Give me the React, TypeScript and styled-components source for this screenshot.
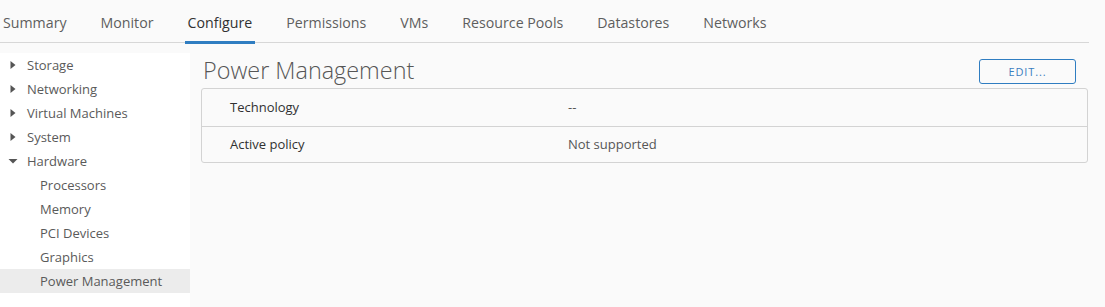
import styled, { createGlobalStyle } from "styled-components";

const GlobalStyle = createGlobalStyle`
  html, body {
    margin: 0;
    padding: 0;
    background: #fafafa;
    font-family: "Open Sans", "Liberation Sans", sans-serif;
    color: #565656;
  }
`;

const tabs = [
  "Summary",
  "Monitor",
  "Configure",
  "Permissions",
  "VMs",
  "Resource Pools",
  "Datastores",
  "Networks",
];

type NavItem = { label: string; level: number; caret?: "right" | "down"; active?: boolean };

const nav: NavItem[] = [
  { label: "Storage", level: 0, caret: "right" },
  { label: "Networking", level: 0, caret: "right" },
  { label: "Virtual Machines", level: 0, caret: "right" },
  { label: "System", level: 0, caret: "right" },
  { label: "Hardware", level: 0, caret: "down" },
  { label: "Processors", level: 1 },
  { label: "Memory", level: 1 },
  { label: "PCI Devices", level: 1 },
  { label: "Graphics", level: 1 },
  { label: "Power Management", level: 1, active: true },
];

const rows = [
  { label: "Technology", value: "--" },
  { label: "Active policy", value: "Not supported" },
];

export default function App() {
  return (
    <Page>
      <GlobalStyle />
      <TabBar>
        {tabs.map((t) => (
          <Tab key={t} $active={t === "Configure"}>
            {t}
          </Tab>
        ))}
      </TabBar>
      <Body>
        <Sidebar>
          {nav.map((n) => (
            <NavRow key={n.label} $level={n.level} $active={!!n.active}>
              {n.caret && (
                <Caret viewBox="0 0 10 10">
                  {n.caret === "right" ? (
                    <path d="M2.5 1 L7.5 5 L2.5 9 Z" fill="#555" />
                  ) : (
                    <path d="M0.5 3 L9.5 3 L5 7.5 Z" fill="#555" />
                  )}
                </Caret>
              )}
              {n.label}
            </NavRow>
          ))}
        </Sidebar>
        <Main>
          <Header>
            <Title>Power Management</Title>
            <EditButton>EDIT...</EditButton>
          </Header>
          <Table>
            {rows.map((r, i) => (
              <Row key={r.label} $first={i === 0}>
                <Label>{r.label}</Label>
                <Value>{r.value}</Value>
              </Row>
            ))}
          </Table>
        </Main>
      </Body>
    </Page>
  );
}

const Page = styled.div`
  width: 1105px;
  height: 307px;
  overflow: hidden;
  background: #fafafa;
`;

const TabBar = styled.nav`
  display: flex;
  height: 42px;
  margin-right: 16px;
  border-bottom: 1px solid #d7d7d7;
  padding-left: 3px;
  gap: 34px;
`;

const Tab = styled.div<{ $active: boolean }>`
  display: flex;
  align-items: center;
  font-size: 14.2px;
  padding: 4px ${(p) => (p.$active ? "3px" : "0")} 0;
  margin: 0 ${(p) => (p.$active ? "-3px" : "0")} -2px;
  color: ${(p) => (p.$active ? "#313131" : "#5e5e5e")};
  border-bottom: 3px solid ${(p) => (p.$active ? "#2f7dc1" : "transparent")};
`;

const Body = styled.div`
  display: flex;
  padding-top: 10px;
`;

const Sidebar = styled.aside`
  width: 190px;
  height: 254px;
  background: #fff;
`;

const NavRow = styled.div<{ $level: number; $active: boolean }>`
  display: flex;
  align-items: center;
  height: 24px;
  font-size: 13px;
  padding-left: ${(p) => (p.$level ? "40px" : "8px")};
  background: ${(p) => (p.$active ? "#ececec" : "transparent")};
  color: #5a5a5a;
`;

const Caret = styled.svg`
  width: 10px;
  height: 10px;
  margin-right: 9px;
`;

const Main = styled.main`
  flex: 1;
  padding: 5px 17px 0 11px;
`;

const Header = styled.div`
  display: flex;
  align-items: center;
  justify-content: space-between;
  height: 26px;
  padding-right: 12px;
`;

const Title = styled.h2`
  margin: -2px 0 0 2px;
  font-size: 23.4px;
  font-weight: 300;
  color: #565656;
`;

const EditButton = styled.button`
  width: 97px;
  height: 25px;
  border: 1px solid #2f7dc1;
  border-radius: 3px;
  background: transparent;
  color: #3a7ec0;
  font-family: inherit;
  font-size: 11px;
  letter-spacing: 0.08em;
  padding: 0;
`;

const Table = styled.div`
  margin-top: 4px;
  border: 1px solid #d3d3d3;
  border-radius: 3px;
`;

const Row = styled.div<{ $first: boolean }>`
  box-sizing: border-box;
  display: grid;
  grid-template-columns: 338px 1fr;
  height: ${(p) => (p.$first ? "37px" : "36px")};
  align-items: center;
  padding-left: 28px;
  padding-bottom: 2px;
  font-size: 13px;
  & + & {
    border-top: 1px solid #d3d3d3;
  }
`;

const Label = styled.div`
  color: #313131;
`;

const Value = styled.div`
  color: #565656;
`;
